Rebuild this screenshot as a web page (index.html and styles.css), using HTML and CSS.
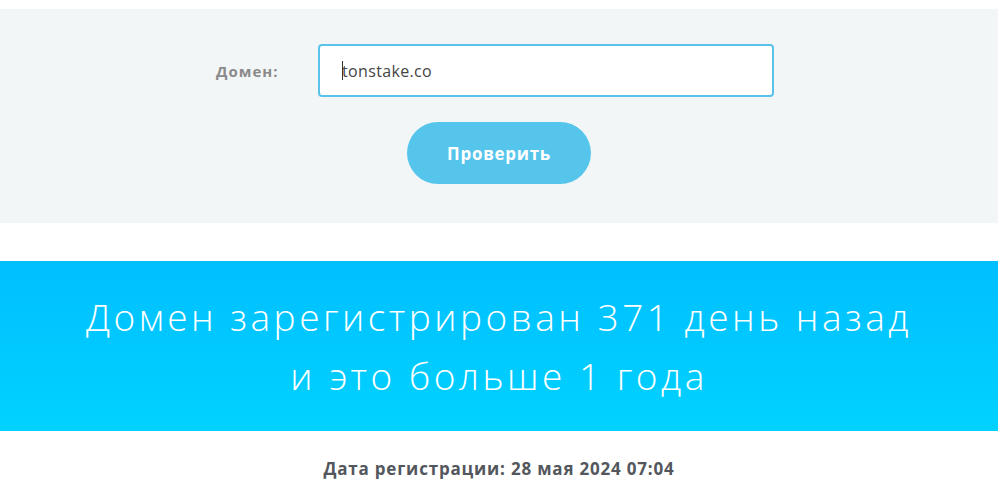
FILE: index.html
```html
<!DOCTYPE html>
<html lang="ru">
<head>
<meta charset="utf-8">
<title>Проверка домена</title>
<link rel="stylesheet" href="styles.css">
</head>
<body>
<section class="form-panel">
  <div class="form-row">
    <label class="form-label" for="domain">Домен:</label>
    <div class="input-box"><span class="caret"></span><span class="input-text">tonstake.co</span></div>
  </div>
  <div class="btn-row">
    <button class="check-btn" type="button">Проверить</button>
  </div>
</section>
<section class="result-banner">
  <p class="result-text">Домен зарегистрирован 371 день назад<br>и это больше 1 года</p>
</section>
<p class="reg-date">Дата регистрации: 28 мая 2024 07:04</p>
</body>
</html>
```
FILE: styles.css
```css
html, body {
  margin: 0;
  padding: 0;
  background: #ffffff;
}
body {
  padding-top: 9px;
  font-family: "Open Sans", "Liberation Sans", sans-serif;
}
.form-panel {
  background: #f3f6f7;
  height: 214px;
  box-sizing: border-box;
  padding-top: 35px;
}
.form-row {
  display: flex;
  align-items: center;
  height: 53px;
  padding-left: 216px;
}
.form-label {
  width: 102px;
  color: #8a8a8a;
  font-weight: 700;
  font-size: 15px;
  letter-spacing: 1px;
}
.input-box {
  width: 456px;
  height: 53px;
  box-sizing: border-box;
  border: 2px solid #5bc2ea;
  border-radius: 4px;
  background: #ffffff;
  display: flex;
  align-items: center;
  padding-left: 22px;
}
.caret {
  width: 1px;
  height: 19px;
  background: #333;
}
.input-text {
  font-size: 16px;
  color: #444;
  margin-left: -1px;
  letter-spacing: 0.35px;
}
.btn-row {
  display: flex;
  padding-left: 407px;
  margin-top: 25px;
}
.check-btn {
  width: 184px;
  height: 62px;
  border: none;
  border-radius: 31px;
  background: #56c5ec;
  color: #ffffff;
  font-family: "Open Sans", "Liberation Sans", sans-serif;
  font-weight: 700;
  font-size: 17px;
  letter-spacing: 0.7px;
  padding: 0;
}
.result-banner {
  margin-top: 38px;
  height: 170px;
  background: linear-gradient(to bottom, #00bfff, #00d2ff);
  display: flex;
  align-items: center;
  justify-content: center;
}
.result-text {
  margin: 0;
  color: #ffffff;
  font-family: "Open Sans", "Liberation Sans", sans-serif;
  font-weight: 300;
  font-size: 37px;
  letter-spacing: 3.5px;
  line-height: 59px;
  text-align: center;
}
.reg-date {
  margin: 26px 0 0;
  text-align: center;
  color: #53575d;
  font-weight: 700;
  font-size: 17px;
  letter-spacing: 0.8px;
}
```
